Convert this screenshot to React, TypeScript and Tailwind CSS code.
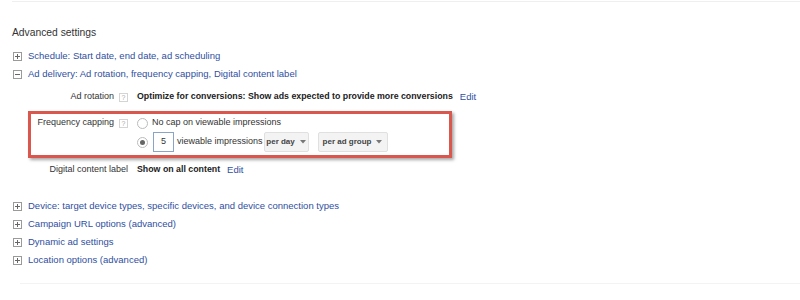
import React from "react";

const linkCls = "text-[#2f4f9f]";

function PlusIcon({ minus = false }: { minus?: boolean }) {
  return (
    <svg width="9" height="9" viewBox="0 0 9 9" className="shrink-0">
      <rect x="0.5" y="0.5" width="8" height="8" fill="#fff" stroke="#9a9a9a" />
      <line x1="2" y1="4.5" x2="7" y2="4.5" stroke="#666" />
      {!minus && <line x1="4.5" y1="2" x2="4.5" y2="7" stroke="#666" />}
    </svg>
  );
}

function Help() {
  return (
    <span className="inline-flex items-center justify-center w-[9px] h-[9px] border border-[#d4d4d4] text-[7px] leading-none text-[#aaa] ml-[5px]">
      ?
    </span>
  );
}

function Caret() {
  return (
    <svg width="6" height="4" viewBox="0 0 6 4" className="ml-[5px]">
      <path d="M0 0 L6 0 L3 3.5 Z" fill="#777" />
    </svg>
  );
}

function Expander({ text, minus = false }: { text: string; minus?: boolean }) {
  return (
    <div className="flex items-center h-[18px] text-[9.5px]">
      <PlusIcon minus={minus} />
      <span className={`ml-[6px] ${linkCls}`}>{text}</span>
    </div>
  );
}

export default function App() {
  return (
    <div
      className="w-[800px] h-[300px] bg-white overflow-hidden text-[9px] text-[#333] whitespace-nowrap"
      style={{ fontFamily: '"Liberation Sans", Arial, sans-serif' }}
    >
      <div className="ml-[12px] h-[2px] border-b border-[#efefef]" />
      <div className="pl-[12px] pt-[22px]">
        <div className="text-[10.3px] text-[#333] h-[18px] flex items-center">Advanced settings</div>
        <div className="mt-[5px] pl-[1px]">
          <Expander text="Schedule: Start date, end date, ad scheduling" />
          <Expander text="Ad delivery: Ad rotation, frequency capping, Digital content label" minus />
        </div>

        <div className="mt-[6px] flex items-center h-[16px]">
          <div className="w-[116px] flex items-center justify-end">
            <span>Ad rotation</span>
            <Help />
          </div>
          <span className="ml-[9px] font-bold text-[8.8px] text-[#222]">
            Optimize for conversions: Show ads expected to provide more conversions
          </span>
          <span className={`ml-[7px] text-[9.5px] ${linkCls}`}>Edit</span>
        </div>

        <div className="mt-[6px] ml-[16px] w-[424px] h-[47px] border-[3px] border-[#d9574c] shadow-[2px_2px_3px_rgba(0,0,0,0.35)] flex">
          <div className="w-[97px] flex justify-end pt-[2px]">
            <div className="flex items-center h-[14px]">
              <span>Frequency capping</span>
              <Help />
            </div>
          </div>
          <div className="ml-[9px] flex flex-col pt-[2px]">
            <div className="flex items-center h-[14px]">
              <span className="w-[11px] h-[11px] rounded-full border border-[#bbb] bg-white" />
              <span className="ml-[4px]">No cap on viewable impressions</span>
            </div>
            <div className="flex items-center h-[22px] mt-[1px]">
              <span className="w-[11px] h-[11px] rounded-full border border-[#bbb] bg-white flex items-center justify-center">
                <span className="w-[5px] h-[5px] rounded-full bg-[#666]" />
              </span>
              <span className="ml-[5px] w-[21px] h-[20px] border border-[#8aa4c8] flex items-center justify-center">5</span>
              <span className="ml-[3px]">viewable impressions</span>
              <span className="ml-[1px] h-[20px] w-[45px] justify-center flex items-center bg-[#f3f3f3] border border-[#e0e0e0] rounded-[2px] text-[8px] text-[#444] font-bold">
                per day
                <Caret />
              </span>
              <span className="ml-[9px] h-[20px] w-[70px] justify-center flex items-center bg-[#f3f3f3] border border-[#e0e0e0] rounded-[2px] text-[8px] text-[#444] font-bold">
                per ad group
                <Caret />
              </span>
            </div>
          </div>
        </div>

        <div className="mt-[4px] flex items-center h-[16px]">
          <div className="w-[116px] flex items-center justify-end">
            <span>Digital content label</span>
          </div>
          <span className="ml-[9px] font-bold text-[8.8px] text-[#222]">Show on all content</span>
          <span className={`ml-[7px] text-[9.5px] ${linkCls}`}>Edit</span>
        </div>

        <div className="mt-[19px] pl-[1px]">
          <Expander text="Device: target device types, specific devices, and device connection types" />
          <Expander text="Campaign URL options (advanced)" />
          <Expander text="Dynamic ad settings" />
          <Expander text="Location options (advanced)" />
        </div>
      </div>
      <div className="ml-[20px] mt-[14px] border-t border-[#f3f3f3]" />
    </div>
  );
}
